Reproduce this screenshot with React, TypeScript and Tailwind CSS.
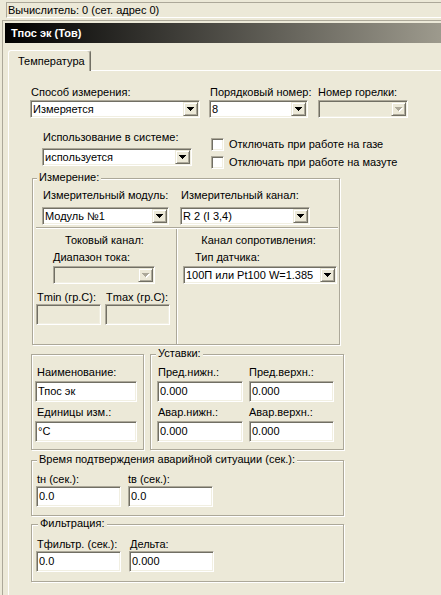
import React from "react";

// Classic 3D sunken edge used by edit boxes, combo boxes and check boxes.
const SUNKEN =
  "border border-t-[#aca899] border-l-[#aca899] border-b-white border-r-white shadow-[inset_1px_1px_0_#716f64,inset_-1px_-1px_0_#f1efe2]";

function Arrow({ disabled }: { disabled?: boolean }) {
  const rows = (dx: number, dy: number, fill: string) => (
    <g fill={fill}>
      <rect x={0 + dx} y={0 + dy} width="7" height="1" />
      <rect x={1 + dx} y={1 + dy} width="5" height="1" />
      <rect x={2 + dx} y={2 + dy} width="3" height="1" />
      <rect x={3 + dx} y={3 + dy} width="1" height="1" />
    </g>
  );
  return (
    <svg width="8" height="5" viewBox="0 0 8 5" shapeRendering="crispEdges">
      {disabled && rows(1, 1, "#ffffff")}
      {rows(0, 0, disabled ? "#aca899" : "#000000")}
    </svg>
  );
}

function Combo({
  value = "",
  className = "",
  disabled,
}: {
  value?: string;
  className?: string;
  disabled?: boolean;
}) {
  return (
    <div
      className={`${SUNKEN} ${
        disabled ? "bg-[#ece9d8]" : "bg-white"
      } h-[18px] flex items-center ${className}`}
    >
      <span className="flex-1 pl-[2px] whitespace-nowrap overflow-hidden">{value}</span>
      <span className="w-[15px] h-[14px] mr-px shrink-0 flex items-center justify-center bg-[#ece9d8] border border-t-[#ece9d8] border-l-[#ece9d8] border-b-[#716f64] border-r-[#716f64] shadow-[inset_1px_1px_0_#ffffff,inset_-1px_-1px_0_#aca899]">
        <Arrow disabled={disabled} />
      </span>
    </div>
  );
}

function Edit({
  value = "",
  className = "",
  disabled,
}: {
  value?: string;
  className?: string;
  disabled?: boolean;
}) {
  return (
    <div
      className={`${SUNKEN} ${
        disabled ? "bg-[#ece9d8]" : "bg-white"
      } h-[21px] flex items-center pl-[2px] whitespace-nowrap overflow-hidden ${className}`}
    >
      {value}
    </div>
  );
}

function Check({ label }: { label: string }) {
  return (
    <div className="flex items-center h-[13px]">
      <span className={`${SUNKEN} bg-white w-[13px] h-[13px] shrink-0`} />
      <span className="ml-[5px] whitespace-nowrap">{label}</span>
    </div>
  );
}

function Group({
  label,
  labelClass = "left-[4px]",
  className = "",
  children,
}: {
  label?: string;
  labelClass?: string;
  className?: string;
  children?: React.ReactNode;
}) {
  return (
    <div
      className={`relative shrink-0 border border-[#aca899] shadow-[1px_1px_0_#ffffff,inset_1px_1px_0_#ffffff] ${className}`}
    >
      {label && (
        <span className={`absolute top-[-8px] ${labelClass} bg-[#ece9d8] px-[2px] whitespace-nowrap`}>
          {label}
        </span>
      )}
      {children}
    </div>
  );
}

export default function App() {
  return (
    <div className="w-[441px] h-[595px] overflow-hidden bg-[#ece9d8] flex flex-col font-['Liberation_Sans',Arial,sans-serif] text-[11px] leading-[13px] text-black">
      {/* status line */}
      <div className="h-[20px] shrink-0 pt-[2px] pl-[6px]">
        <div className="h-[16px] border-t border-l border-[#aca899] border-b border-b-white pl-px pt-px whitespace-nowrap">
          Вычислитель: 0 (сет. адрес 0)
        </div>
      </div>

      <div className="flex-1 min-h-0 ml-[2px] border-t border-l border-[#aca899] flex flex-col">
        {/* caption */}
        <div className="mt-[2px] ml-[2px] h-[20px] shrink-0 bg-[linear-gradient(to_right,#000000,#9d9a8d)] flex items-center pl-[6px] font-bold text-white whitespace-nowrap">
          Тпос эк (Тов)
        </div>

        {/* tab */}
        <div className="relative z-10 -mb-px ml-[5px] mt-[7px] w-[83px] h-[21px] shrink-0 bg-[#ece9d8] border-t border-l border-white border-r border-r-[#716f64] rounded-t-[3px] shadow-[inset_-1px_0_0_#aca899] pl-[9px] pt-[4px] whitespace-nowrap">
          Температура
        </div>

        {/* tab page */}
        <div className="flex-1 ml-[5px] border-t border-l border-white pl-[22px] pt-[15px] flex flex-col">
          <div className="flex -ml-px">
            <div className="w-[170px]">
              <div className="pl-px whitespace-nowrap">Способ измерения:</div>
              <Combo className="mt-px" value="Измеряется" />
            </div>
            <div className="ml-[9px] w-[99px]">
              <div className="pl-px whitespace-nowrap">Порядковый номер:</div>
              <Combo className="mt-px" value="8" />
            </div>
            <div className="ml-[10px] w-[90px]">
              <div className="whitespace-nowrap">Номер горелки:</div>
              <Combo className="mt-px" disabled />
            </div>
          </div>

          <div className="flex mt-[13px]">
            <div className="ml-[11px] w-[150px]">
              <div className="pl-px whitespace-nowrap">Использование в системе:</div>
              <Combo className="mt-[4px]" value="используется" />
            </div>
            <div className="ml-[19px] pt-[7px] flex flex-col gap-[5px]">
              <Check label="Отключать при работе на газе" />
              <Check label="Отключать при работе на мазуте" />
            </div>
          </div>

          {/* measurement */}
          <Group
            label="Измерение:"
            labelClass="left-[4px]"
            className="mt-[9px] ml-px w-[308px] h-[167px] flex flex-col"
          >
            <div className="flex pt-[10px] pl-[9px]">
              <div className="w-[127px]">
                <div className="pl-px whitespace-nowrap">Измерительный модуль:</div>
                <Combo className="mt-[5px]" value="Модуль №1" />
              </div>
              <div className="ml-[11px] w-[130px]">
                <div className="pl-px whitespace-nowrap">Измерительный канал:</div>
                <Combo className="mt-[5px]" value="R 2 (I 3,4)" />
              </div>
            </div>
            <div className="mt-[2px] ml-[3px] mr-px h-[2px] border-t border-[#aca899] border-b border-b-white" />
            <div className="flex flex-1">
              <div className="w-[143px]">
                <div className="text-center mt-[5px] whitespace-nowrap">Токовый канал:</div>
                <div className="pl-[20px] mt-[4px] whitespace-nowrap">Диапазон тока:</div>
                <Combo className="mt-[2px] ml-[20px] w-[102px]" disabled />
                <div className="flex pl-[3px] mt-[7px]">
                  <div className="w-[65px]">
                    <div className="pl-px whitespace-nowrap">Tmin (гр.С):</div>
                    <Edit disabled />
                  </div>
                  <div className="ml-[4px] w-[65px]">
                    <div className="pl-px whitespace-nowrap">Tmax (гр.С):</div>
                    <Edit disabled />
                  </div>
                </div>
              </div>
              <div className="w-[2px] border-l border-[#aca899] border-r border-r-white" />
              <div className="flex-1">
                <div className="text-center mt-[5px] whitespace-nowrap">Канал сопротивления:</div>
                <div className="pl-[17px] mt-[4px] whitespace-nowrap">Тип датчика:</div>
                <Combo className="mt-[2px] ml-[5px] w-[154px]" value="100П или Pt100 W=1.385" />
              </div>
            </div>
          </Group>

          {/* name / set points */}
          <div className="flex mt-[9px]">
            <Group className="w-[113px] h-[96px]">
              <div className="pl-[5px] pt-[11px] whitespace-nowrap">Наименование:</div>
              <Edit className="ml-[3px] mt-[2px] w-[102px]" value="Тпос эк" />
              <div className="pl-[5px] mt-[4px] whitespace-nowrap">Единицы изм.:</div>
              <Edit className="ml-[3px] mt-[2px] w-[102px]" value="°C" />
            </Group>
            <Group label="Уставки:" labelClass="left-[5px]" className="ml-[6px] w-[194px] h-[96px]">
              <div className="flex pl-[6px] pt-[11px]">
                <div className="w-[86px]">
                  <div className="pl-px whitespace-nowrap">Пред.нижн.:</div>
                  <Edit className="mt-[2px]" value="0.000" />
                  <div className="pl-px mt-[4px] whitespace-nowrap">Авар.нижн.:</div>
                  <Edit className="mt-[2px]" value="0.000" />
                </div>
                <div className="ml-[6px] w-[85px]">
                  <div className="whitespace-nowrap">Пред.верхн.:</div>
                  <Edit className="mt-[2px]" value="0.000" />
                  <div className="mt-[4px] whitespace-nowrap">Авар.верхн.:</div>
                  <Edit className="mt-[2px]" value="0.000" />
                </div>
              </div>
            </Group>
          </div>

          {/* alarm confirmation time */}
          <Group
            label="Время подтверждения аварийной ситуации (сек.):"
            labelClass="left-[5px]"
            className="mt-[10px] w-[313px] h-[56px]"
          >
            <div className="flex pl-[4px] pt-[12px]">
              <div className="w-[85px]">
                <div className="pl-px whitespace-nowrap">tн (сек.):</div>
                <Edit value="0.0" />
              </div>
              <div className="ml-[7px] w-[85px]">
                <div className="whitespace-nowrap">tв (сек.):</div>
                <Edit value="0.0" />
              </div>
            </div>
          </Group>

          {/* filtering */}
          <Group label="Фильтрация:" labelClass="left-[6px]" className="mt-[8px] w-[313px] h-[58px]">
            <div className="flex pl-[4px] pt-[13px]">
              <div className="w-[85px]">
                <div className="pl-px whitespace-nowrap">Тфильтр. (сек.):</div>
                <Edit value="0.0" />
              </div>
              <div className="ml-[8px] w-[85px]">
                <div className="pl-px whitespace-nowrap">Дельта:</div>
                <Edit value="0.000" />
              </div>
            </div>
          </Group>
        </div>
      </div>
    </div>
  );
}
